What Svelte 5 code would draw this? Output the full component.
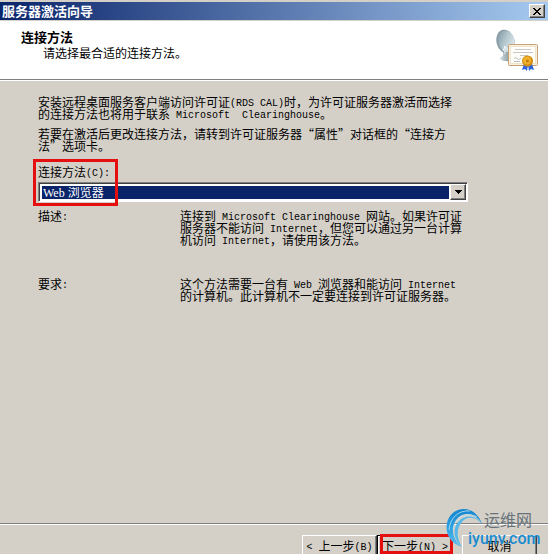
<script lang="ts">
  const split = (text: string) => text.match(/[\x20-\x7e]+|[^\x20-\x7e]+/g) ?? [];
  const isLatin = (run: string) => /^[\x20-\x7e]/.test(run);

  const notes = [
    '安装远程桌面服务客户端访问许可证(RDS CAL)时，为许可证服务器激活而选择的连接方法也将用于联系 Microsoft  Clearinghouse。',
    '若要在激活后更改连接方法，请转到许可证服务器“属性”对话框的“连接方法”选项卡。'
  ];
  const details = [
    {
      term: '描述:',
      text: '连接到 Microsoft Clearinghouse 网站。如果许可证服务器不能访问 Internet，但您可以通过另一台计算机访问 Internet，请使用该方法。'
    },
    {
      term: '要求:',
      text: '这个方法需要一台有 Web 浏览器和能访问 Internet 的计算机。此计算机不一定要连接到许可证服务器。'
    }
  ];
</script>

{#snippet mixed(text: string)}{#each split(text) as run}{#if isLatin(run)}<span class="latin">{run}</span>{:else}{run}{/if}{/each}{/snippet}

<main class="wizard" lang="zh-CN">
  <div class="titlebar">
    <span>服务器激活向导</span>
    <button class="close" aria-label="关闭">
      <svg width="8" height="7" viewBox="0 0 8 7" shape-rendering="crispEdges"><path d="M0 0h2v1h1v1h2V1h1V0h2v1H7v1H6v1H5v1h1v1h1v1h1v1H6V6H5V5H3v1H2v1H0V6h1V5h1V4h1V3H2V2H1V1H0z" fill="#000" /></svg>
    </button>
  </div>

  <header>
    <div>
      <h1>连接方法</h1>
      <p>请选择最合适的连接方法。</p>
    </div>
    <svg class="emblem" width="44" height="44" viewBox="0 0 44 44" aria-hidden="true">
      <defs>
        <linearGradient id="dish" x1="0" y1="0" x2="1" y2="1">
          <stop offset="0" stop-color="#7d939c" /><stop offset=".45" stop-color="#b4c8cf" /><stop offset="1" stop-color="#edf5f7" />
        </linearGradient>
        <linearGradient id="base" x1="0" y1="0" x2="1" y2="0">
          <stop offset="0" stop-color="#d5dfe3" /><stop offset="1" stop-color="#82959d" />
        </linearGradient>
      </defs>
      <path d="M8 21v6q-3 1-3 3 3 3 10 2V21z" fill="url(#base)" />
      <ellipse cx="10.500" cy="12.500" rx="9" ry="12" transform="rotate(-14 10.500 12.500)" fill="#8a9da6" />
      <ellipse cx="11.500" cy="12.500" rx="8" ry="11" transform="rotate(-14 11.500 12.500)" fill="url(#dish)" />
      <path d="M8 22l2-5 3 4M10 17v8" fill="none" stroke="#f2f7f9" />
      <rect x="13.500" y="15.500" width="29" height="21" rx="1" fill="#f7f1df" stroke="#c8a074" />
      <rect x="15.500" y="17.500" width="25" height="17" fill="#fffef9" stroke="#efe3cb" />
      <path d="M20 20.500h16M18 23.500h20M25 26.500h8" stroke="#b6b9bf" stroke-width=".8" />
      <path d="M19 29.500q2-2 3 0t4 0M19 32.500h6" fill="none" stroke="#999faa" stroke-width=".7" />
      <path d="M29 35l-2 6 3-1 2 2 1-6zM33 36l1 6 2-2 3 1-2-6z" fill="#2b62dc" />
      <circle cx="32.500" cy="32" r="5.500" fill="#d28a0c" />
      <circle cx="32" cy="31.500" r="4" fill="#eeb02c" />
      <circle cx="32.500" cy="32" r="1.500" fill="#c77d0a" />
    </svg>
  </header>

  <section class="body">
    {#each notes as note}
      <p class="note">{@render mixed(note)}</p>
    {/each}

    <div class="field">
      <label for="method">{@render mixed('连接方法(C):')}</label>
      <div class="combo">
        <select id="method">
          <option>Web 浏览器</option>
        </select>
        <span class="arrow" aria-hidden="true"><svg width="7" height="4" viewBox="0 0 7 4" shape-rendering="crispEdges"><path d="M0 0h7v1H6v1H5v1H4v1H3V3H2V2H1V1H0z" /></svg></span>
      </div>
      <div class="mark"></div>
    </div>

    <dl>
      {#each details as item}
        <div class="row">
          <dt>{@render mixed(item.term)}</dt>
          <dd>{@render mixed(item.text)}</dd>
        </div>
      {/each}
    </dl>
  </section>

  <footer>
    <button>{@render mixed('< 上一步(B)')}</button>
    <button class="default">{@render mixed('下一步(N) >')}<span class="mark"></span></button>
    <button class="cancel">取消</button>
    <div class="watermark">
      <svg width="46" height="44" viewBox="0 0 46 44" aria-hidden="true">
        <defs>
          <linearGradient id="swirl" x1="0" y1="0" x2="0" y2="1">
            <stop offset="0" stop-color="#1686cf" /><stop offset=".5" stop-color="#2ba1e2" /><stop offset="1" stop-color="#62bcea" />
          </linearGradient>
        </defs>
        <path d="M37 17C33 4 20-2 9 5-2 13-2 34 17 40 8 33 5 22 11 13 17 4 30 5 37 17z" fill="url(#swirl)" />
        <path d="M37 17C31 8 20 7 13 15 7 23 9 33 17 40 12 32 11 23 16 16 21 9 30 9 37 17z" fill="#55b8ea" />
        <path d="M25 4C13 3 5 11 4 23M32 10C21 4 11 10 8 22" fill="none" stroke="#c3e3f1" stroke-width=".8" />
      </svg>
      <span class="site">运维网</span>
      <span class="domain">iyunv.com</span>
    </div>
  </footer>
</main>

<style>
  :global(body) { overflow: hidden; }
  .wizard {
    box-sizing: border-box;
    height: 100vh;
    display: flex;
    flex-direction: column;
    overflow: hidden;
    padding-top: 2px;
    background: #d4d0c8;
    color: #000;
    font: 12px/12px "Noto Sans CJK SC", sans-serif;
    text-spacing-trim: space-all;
  }
  p, h1, dl, dd { margin: 0; }
  button, select { font: inherit; color: inherit; border-radius: 0; }
  .latin { font: 10px/0 "Liberation Mono", monospace; white-space: pre-wrap; vertical-align: 1px; }

  .titlebar {
    flex: none;
    display: flex;
    align-items: center;
    justify-content: space-between;
    height: 18px;
    padding: 0 3px 0 2px;
    background: linear-gradient(90deg, #0a246a, #a6caf0);
    color: #fff;
    font-size: 13px;
    font-weight: bold;
  }
  .close {
    display: flex;
    align-items: center;
    justify-content: center;
    width: 16px;
    height: 14px;
    padding: 0;
    background: #d4d0c8;
    border: 1px solid;
    border-color: #fff #404040 #404040 #fff;
    box-shadow: inset -1px -1px #808080;
  }

  header {
    flex: none;
    display: flex;
    justify-content: space-between;
    box-sizing: border-box;
    height: 60px;
    padding: 8px 9px 0 21px;
    background: #fff;
    border-top: 1px solid #d4d0c8;
    border-bottom: 1px solid #808080;
  }
  h1 { font-size: 13px; line-height: 16px; }
  header p { padding-left: 22px; line-height: 16px; }

  .body {
    flex: 1;
    padding: 15px 80px 0 38px;
    border-top: 1px solid #fff;
  }
  .note { max-width: 420px; margin-bottom: 8px; }

  .field { position: relative; margin-top: 14px; }
  label { display: block; margin-bottom: 4px; }
  .combo {
    display: flex;
    height: 20px;
    box-sizing: border-box;
    padding: 1px;
    background: #fff;
    border: 1px solid;
    border-color: #808080 #fff #fff #808080;
    box-shadow: inset 1px 1px #404040;
  }
  select {
    flex: 1;
    appearance: none;
    margin: 1px 0 0 1px;
    padding: 0 1px;
    border: 1px solid #fff;
    outline: none;
    background: #0a246a;
    color: #fff;
    font-family: "Liberation Serif", "Noto Sans CJK SC", serif;
  }
  .arrow {
    pointer-events: none;
    display: flex;
    align-items: center;
    justify-content: center;
    width: 14px;
    background: #d4d0c8;
    border: 1px solid;
    border-color: #fff #404040 #404040 #fff;
    box-shadow: inset -1px -1px #808080;
  }
  .mark {
    position: absolute;
    box-sizing: border-box;
    border: 3px solid #e60f0f;
    pointer-events: none;
  }
  .field .mark { top: -7px; left: -5px; width: 85px; height: 47px; }

  dl { margin-top: 8px; }
  .row { display: flex; min-height: 68px; }
  dt { flex: none; width: 142px; }
  dd { flex: 1; max-width: 286px; }

  footer {
    position: relative;
    flex: none;
    display: flex;
    align-items: flex-start;
    justify-content: flex-end;
    box-sizing: border-box;
    height: 31px;
    padding: 11px 11px 0 0;
    border-top: 1px solid #808080;
    box-shadow: inset 0 1px #fff;
  }
  footer button {
    flex: none;
    box-sizing: border-box;
    width: 75px;
    height: 23px;
    padding: 0 0 2px;
    white-space: nowrap;
    background: #d4d0c8;
    border: 1px solid;
    border-color: #fff #404040 #404040 #fff;
    box-shadow: inset -1px -1px #808080;
  }
  footer .default {
    position: relative;
    width: 76px;
    border-color: #000;
    box-shadow: inset 1px 1px #fff;
  }
  .default .mark { top: -2px; left: 2px; width: 73px; height: 20px; }
  footer .cancel { margin-left: 9px; }

  .watermark {
    position: absolute;
    right: 6px;
    bottom: 3px;
    display: grid;
    grid-template-columns: 23px auto;
    width: 97px;
    height: 44px;
    pointer-events: none;
  }
  .watermark svg { grid-area: 1 / 1 / 3 / 3; }
  .site {
    grid-area: 1 / 2;
    padding: 4px 0 0 16px;
    color: #68727b;
    font-size: 16px;
    line-height: 16px;
  }
  .domain {
    grid-area: 2 / 2;
    color: #198bd1;
    font: 500 16px/16px Roboto, sans-serif;
  }
</style>
